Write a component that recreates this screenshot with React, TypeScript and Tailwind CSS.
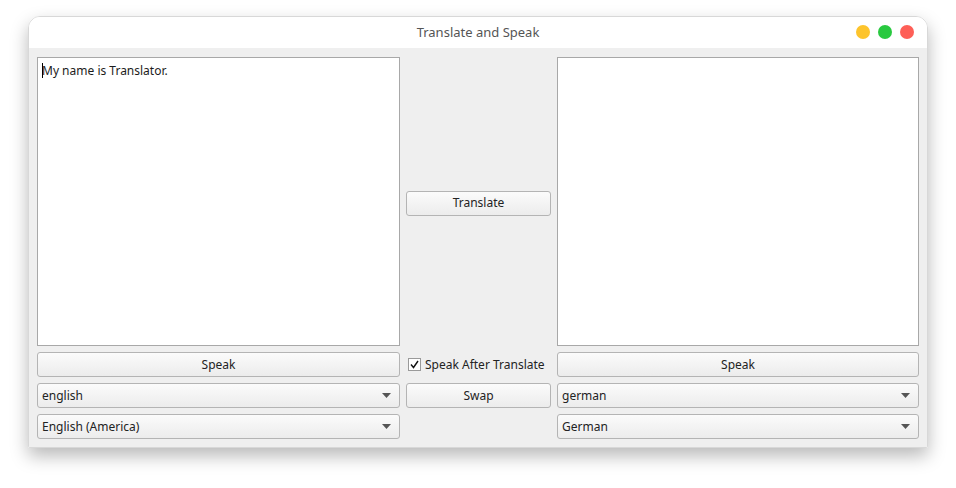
import React from 'react'

const font = { fontFamily: '"Noto Sans", "DejaVu Sans", sans-serif' }

const Button = ({ label }: { label: string }) => (
  <button className="h-full w-full rounded-[3px] border border-[#b4b4b4] bg-gradient-to-b from-[#fbfbfb] to-[#ececec] text-[12px] text-[#232323]">
    {label}
  </button>
)

const Combo = ({ value }: { value: string }) => (
  <div className="flex h-full w-full items-center justify-between rounded-[3px] border border-[#b4b4b4] bg-gradient-to-b from-[#fbfbfb] to-[#ececec] pl-[4px] pr-[8px] text-[12px] text-[#232323]">
    <span>{value}</span>
    <svg width="9" height="5" viewBox="0 0 9 5">
      <path d="M0 0 H9 L4.5 5 Z" fill="#555" />
    </svg>
  </div>
)

const App = () => {
  return (
    <div className="flex h-[488px] w-[956px] justify-center bg-white pt-[16px]" style={font}>
      <div className="flex h-[432px] w-[900px] flex-col overflow-hidden rounded-t-[12px] rounded-b-[2px] border border-[#d8d8d8] shadow-[0_8px_18px_rgba(0,0,0,0.28)]">
        <div className="relative flex h-[31px] shrink-0 items-center justify-center bg-white">
          <span className="text-[13px] text-[#555]">Translate and Speak</span>
          <div className="absolute right-[13px] top-[8px] flex gap-[8px]">
            <span className="h-[14px] w-[14px] rounded-full bg-[#fdc42c]" />
            <span className="h-[14px] w-[14px] rounded-full bg-[#29c940]" />
            <span className="h-[14px] w-[14px] rounded-full bg-[#fe5f57]" />
          </div>
        </div>
        <div className="grid flex-1 grid-cols-[363px_145px_362px] grid-rows-[289px_25px_25px_25px] gap-[6px] bg-[#efefef] px-[8px] pt-[9px]">
          <div className="border border-[#a8a8a8] bg-white px-[4px] py-[4px] text-[12px] text-[#1c1c1c]">
            <span className="relative">
              <span className="absolute left-0 top-[1px] h-[15px] w-px bg-black" />
              My name is Translator.
            </span>
          </div>
          <div className="pt-[132px]">
            <div className="h-[25px] w-full">
              <Button label="Translate" />
            </div>
          </div>
          <div className="border border-[#a8a8a8] bg-white" />

          <Button label="Speak" />
          <label className="flex items-center gap-[4px] pl-[2px] text-[12px] text-[#232323]">
            <span className="flex h-[13px] w-[13px] items-center justify-center border border-[#9a9a9a] bg-white">
              <svg width="9" height="9" viewBox="0 0 9 9">
                <path d="M1 4.5 L3.5 7.5 L8 1" fill="none" stroke="#111" strokeWidth="1.4" />
              </svg>
            </span>
            Speak After Translate
          </label>
          <Button label="Speak" />

          <Combo value="english" />
          <Button label="Swap" />
          <Combo value="german" />

          <Combo value="English (America)" />
          <div />
          <Combo value="German" />
        </div>
      </div>
    </div>
  )
}

export default App
